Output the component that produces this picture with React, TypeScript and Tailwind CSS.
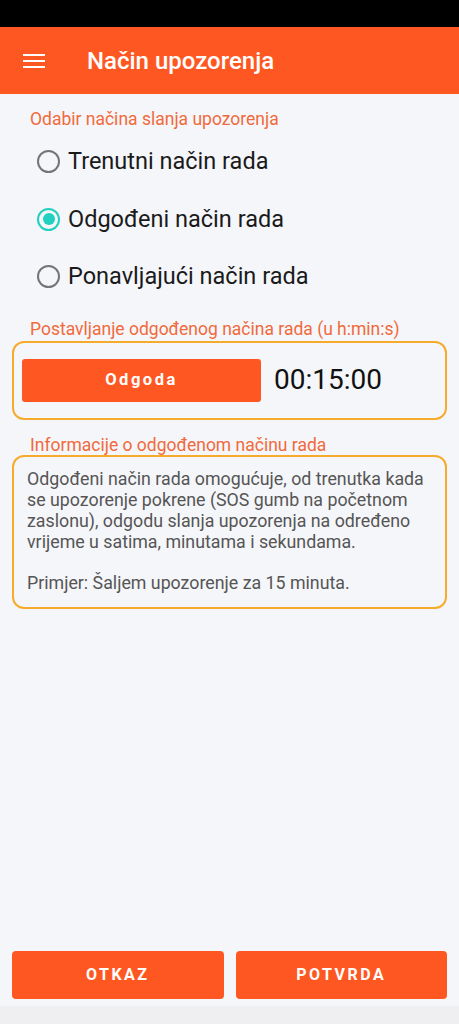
import { useState } from "react";

const modes = ["Trenutni način rada", "Odgođeni način rada", "Ponavljajući način rada"];

function Radio({ checked }: { checked: boolean }) {
  return checked ? (
    <span className="flex h-[23px] w-[23px] items-center justify-center rounded-full border-[2.5px] border-[#1fd1be]">
      <span className="h-[12px] w-[12px] rounded-full bg-[#1fd1be]" />
    </span>
  ) : (
    <span className="h-[23px] w-[23px] rounded-full border-[2.5px] border-[#757575]" />
  );
}

export default function App() {
  const [mode, setMode] = useState(1);

  return (
    <div className="flex h-[1024px] w-[459px] flex-col bg-[#f5f6fa] font-['Roboto',sans-serif]">
      <div className="h-[27px] bg-black" />

      {/* toolbar */}
      <div className="flex h-[67px] items-center bg-[#ff5722] text-white">
        <svg className="ml-[23px]" width="22" height="14" viewBox="0 0 22 14">
          <rect x="0" y="0" width="22" height="2" fill="white" />
          <rect x="0" y="6" width="22" height="2" fill="white" />
          <rect x="0" y="12" width="22" height="2" fill="white" />
        </svg>
        <h1 className="ml-[42px] text-[24px] font-medium">Način upozorenja</h1>
      </div>

      <div className="flex flex-1 flex-col px-[12px]">
        <p className="mt-[14px] pl-[18px] text-[17.5px] leading-[22px] text-[#f06a3c]">
          Odabir načina slanja upozorenja
        </p>

        <div className="mt-[3px] flex flex-col">
          {modes.map((m, i) => (
            <button
              key={m}
              onClick={() => setMode(i)}
              className="flex h-[57.5px] items-center gap-[8px] pl-[25px] text-left"
            >
              <Radio checked={mode === i} />
              <span className="text-[23.5px] text-[#1a1a1a]">{m}</span>
            </button>
          ))}
        </div>

        <p className="mt-[12px] pl-[18px] text-[17.5px] leading-[22px] text-[#f06a3c]">
          Postavljanje odgođenog načina rada (u h:min:s)
        </p>
        <div className="mt-[1px] flex h-[79px] items-center gap-[13px] rounded-[12px] border-2 border-[#f6ab2c] px-[8px]">
          <button className="h-[43px] w-[239px] rounded-[3px] bg-[#ff5722] text-[16.5px] font-bold tracking-[2.5px] text-white">
            Odgoda
          </button>
          <span className="text-[28px] text-[#111]">00:15:00</span>
        </div>

        <p className="mt-[14px] pl-[18px] text-[17.5px] leading-[22px] text-[#f06a3c]">
          Informacije o odgođenom načinu rada
        </p>
        <div className="-mt-[1px] rounded-[12px] border-2 border-[#f6ab2c] px-[13px] pb-[14px] pt-[11px] text-[17.8px] leading-[21px] text-[#555]">
          <p>
            Odgođeni način rada omogućuje, od trenutka kada
            <br />
            se upozorenje pokrene (SOS gumb na početnom
            <br />
            zaslonu), odgodu slanja upozorenja na određeno
            <br />
            vrijeme u satima, minutama i sekundama.
          </p>
          <p className="mt-[20px]">Primjer: Šaljem upozorenje za 15 minuta.</p>
        </div>

        <div className="mt-auto mb-[7px] flex gap-[12px]">
          <button className="h-[48px] flex-1 rounded-[4px] bg-[#ff5722] text-[16px] font-bold tracking-[2.5px] text-white">
            OTKAZ
          </button>
          <button className="h-[48px] flex-1 rounded-[4px] bg-[#ff5722] text-[16px] font-bold tracking-[2.5px] text-white">
            POTVRDA
          </button>
        </div>
      </div>
      <div className="h-[18px] bg-[#efeff1]" />
    </div>
  );
}
